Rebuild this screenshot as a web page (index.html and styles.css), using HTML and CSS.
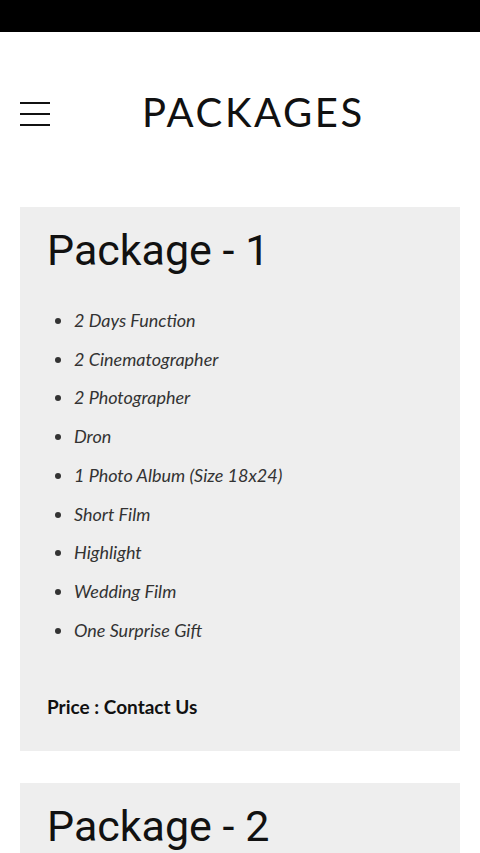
FILE: index.html
```html
<!DOCTYPE html>
<html lang="en">
<head>
<meta charset="utf-8">
<title>Packages</title>
<link rel="stylesheet" href="styles.css">
</head>
<body>
<div class="topbar"></div>
<header class="header">
  <button class="menu" aria-label="Menu">
    <span></span><span></span><span></span>
  </button>
  <h1 class="title">PACKAGES</h1>
</header>
<main class="packages">
  <section class="card">
    <h2 class="card-title">Package - 1</h2>
    <ul class="features">
      <li>2 Days Function</li>
      <li>2 Cinematographer</li>
      <li>2 Photographer</li>
      <li>Dron</li>
      <li>1 Photo Album (Size 18x24)</li>
      <li>Short Film</li>
      <li>Highlight</li>
      <li>Wedding Film</li>
      <li>One Surprise Gift</li>
    </ul>
    <p class="price">Price : Contact Us</p>
  </section>
  <section class="card">
    <h2 class="card-title">Package - 2</h2>
    <ul class="features">
      <li>2 Days Function</li>
      <li>2 Cinematographer</li>
    </ul>
  </section>
</main>
</body>
</html>
```
FILE: styles.css
```css
html, body {
  margin: 0;
  padding: 0;
  background: #fff;
  font-family: Lato, "Liberation Sans", sans-serif;
  color: #111;
}

.topbar {
  height: 32px;
  background: #000;
}

.header {
  display: flex;
  align-items: center;
  height: 160px;
  padding: 0 20px;
}

.menu {
  display: flex;
  flex-direction: column;
  gap: 9px;
  width: 30px;
  padding: 0;
  border: 0;
  background: none;
  margin-top: 4px;
}

.menu span {
  display: block;
  height: 2px;
  background: #111;
}

.title {
  margin: 0 0 0 92px;
  font-weight: 400;
  font-size: 40px;
  letter-spacing: 2.6px;
  color: #111;
}

.packages {
  display: flex;
  flex-direction: column;
  gap: 32px;
  padding: 15px 20px 0;
}

.card {
  background: #eeeeee;
  padding: 22px 27px 32px;
}

.card-title {
  margin: 0;
  font-family: Roboto, "Liberation Sans", sans-serif;
  font-weight: 400;
  font-size: 43px;
  line-height: 42px;
  color: #111;
}

.features {
  margin: 30px 0 0;
  padding-left: 27px;
  list-style: disc;
  color: #333;
}

.features li {
  font-style: italic;
  font-size: 18px;
  line-height: 38.7px;
}

.price {
  margin: 46px 0 0;
  font-weight: 700;
  font-size: 19px;
  line-height: 24px;
}
```
